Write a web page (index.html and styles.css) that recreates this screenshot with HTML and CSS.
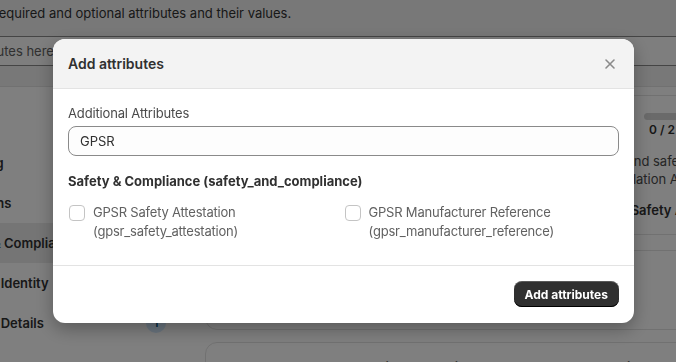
FILE: index.html
```html
<!DOCTYPE html>
<html lang="en">

<head>
  <meta charset="UTF-8" />
  <title>Listing - Add attributes</title>
  <meta name="viewport" content="width=device-width, initial-scale=1.0" />
  <link rel="stylesheet" href="styles.css">
</head>

<body>
  <div class="page">
    <p class="intro">Select required and optional attributes and their values.</p>
    <div class="search">Search attributes here</div>

    <div class="layout">
      <nav class="sidebar">
        <a>Shipping</a>
        <a>Variations</a>
        <a class="active">Safety &amp; Compliance</a>
        <a>Product Identity</a>
        <a>Product Details <span class="badge">1</span></a>
      </nav>

      <div class="content">
        <section class="section-card">
          <div class="section-head">
            <h4>Safety &amp; Compliance</h4>
            <div class="progress">
              <div class="progress-bar"></div>
              <span>0 / 2 required</span>
            </div>
          </div>
          <p class="section-desc">Provide information about the product's compliance with regional and safety
            requirements, including the General Product Safety Regulation (GPSR) and the Consumer Regulation Act.</p>
          <p class="section-field">Responsible person details and the GPSR Regulatory Information Safety Attestation</p>
          <div class="section-row"></div>
        </section>

        <section class="section-card">
          <h4>Dangerous Goods Regulations (supplier_declared_dg_hz_regulation)</h4>
        </section>
      </div>
    </div>
  </div>

  <div class="overlay">
    <div class="modal">
      <div class="modal-header">
        <h3>Add attributes</h3>
        <button class="close" aria-label="Close">
          <svg width="12" height="12" viewBox="0 0 12 12">
            <path d="M2 2l8 8M10 2l-8 8" stroke="#8a8a8a" stroke-width="1.6" stroke-linecap="round" />
          </svg>
        </button>
      </div>

      <div class="modal-body">
        <label class="field-label" for="attrSearch">Additional Attributes</label>
        <input id="attrSearch" class="field-input" type="text" value="GPSR" />

        <h4 class="group-title">Safety &amp; Compliance (safety_and_compliance)</h4>
        <div class="options">
          <label class="option">
            <span class="checkbox"></span>
            <span>GPSR Safety Attestation<br>(gpsr_safety_attestation)</span>
          </label>
          <label class="option">
            <span class="checkbox"></span>
            <span>GPSR Manufacturer Reference<br>(gpsr_manufacturer_reference)</span>
          </label>
        </div>
      </div>

      <div class="modal-footer">
        <button class="btn">Add attributes</button>
      </div>
    </div>
  </div>
</body>

</html>
```

FILE: styles.css
```css
html,
body {
  overflow: hidden;
}

body {
  margin: 0;
  background: #f1f1f1;
  font-family: 'Inter', 'Liberation Sans', sans-serif;
  font-size: 13px;
  color: #303030;
}

/* page behind the modal */
.page {
  width: 940px;
  margin-left: -48px;
  padding-top: 3px;
}

.intro {
  margin: 0;
  line-height: 20px;
  height: 33px;
}

.search {
  height: 28px;
  line-height: 28px;
  margin-left: -47px;
  padding-left: 12px;
  background: #fdfdfd;
  border: 1px solid #8a8a8a;
  color: #616161;
}

.layout {
  display: flex;
  gap: 31px;
  margin-top: 20px;
  border-top: 1px solid #e3e3e3;
  background: #fff;
}

.sidebar {
  flex: none;
  width: 222px;
  padding-top: 56px;
}

.sidebar a {
  display: flex;
  align-items: center;
  justify-content: space-between;
  height: 40px;
  margin-left: -4px;
  padding-right: 8px;
  font-weight: 600;
  color: #303030;
}

.sidebar a.active {
  background: #ebebeb;
}

.badge {
  width: 20px;
  height: 20px;
  border-radius: 50%;
  background: #d5ebff;
  color: #00527c;
  font-size: 11px;
  text-align: center;
  line-height: 20px;
}

.content {
  flex: 1;
  min-width: 0;
  padding-top: 8px;
  display: flex;
  flex-direction: column;
  gap: 12px;
}

.section-card {
  background: #fff;
  border: 1px solid #e3e3e3;
  border-radius: 12px;
  padding: 16px;
}

.section-card h4 {
  margin: 0;
  font-weight: 600;
}

.section-head {
  display: flex;
  justify-content: space-between;
  padding-top: 1px;
}

.progress {
  width: 231px;
  font-weight: 600;
  font-size: 12px;
}

.progress span {
  padding-left: 5px;
}

.progress-bar {
  height: 7px;
  border-radius: 4px;
  background: #d4d4d4;
  margin-bottom: 2px;
}

.section-desc {
  margin: 15px 0 0;
  line-height: 18px;
  color: #4a4a4a;
}

.section-field {
  margin: 14px 0 0;
  font-weight: 600;
  white-space: nowrap;
}

.section-row {
  margin: 16px -16px 62px;
  height: 15px;
  border-top: 1px solid #e3e3e3;
  border-bottom: 1px solid #e3e3e3;
}

/* modal */
.overlay {
  position: fixed;
  inset: 0;
  background: rgba(0, 0, 0, 0.5);
  padding: 39px 42px 0 53px;
}

.modal {
  background: #fff;
  border-radius: 12px;
  overflow: hidden;
  box-shadow: 0 6px 18px rgba(0, 0, 0, 0.3);
}

.modal-header {
  display: flex;
  align-items: center;
  justify-content: space-between;
  height: 49px;
  padding: 0 18px 0 15px;
  background: #f3f3f3;
  border-bottom: 1px solid #e3e3e3;
}

.modal-header h3 {
  margin: 0;
  font-size: 14px;
  font-weight: 600;
  color: #303030;
}

.close {
  border: none;
  background: none;
  padding: 0;
  width: 12px;
  height: 12px;
  display: flex;
}

.modal-body {
  padding: 14px 15px 24px;
}

.field-label {
  display: block;
  line-height: 20px;
  margin-bottom: 3px;
  letter-spacing: -0.15px;
  color: #4a4a4a;
}

.field-input {
  box-sizing: border-box;
  width: 100%;
  height: 30px;
  padding: 0 11px;
  border: 1px solid #8a8a8a;
  border-radius: 8px;
  background: #fdfdfd;
  font-family: inherit;
  font-size: 13px;
  color: #303030;
}

.group-title {
  margin: 15px 0 12px;
  line-height: 20px;
  font-size: 13px;
  font-weight: 700;
  color: #303030;
}

.options {
  display: grid;
  grid-template-columns: 1fr 1fr;
}

.option {
  display: flex;
  gap: 8px;
  line-height: 19px;
  letter-spacing: -0.2px;
  color: #616161;
}

.checkbox {
  flex: none;
  box-sizing: border-box;
  width: 16px;
  height: 16px;
  margin: 2px 0 0 1px;
  border: 1.5px solid #c4c4c4;
  border-radius: 4px;
  background: #fff;
}

.modal-footer {
  display: flex;
  justify-content: flex-end;
  padding: 15px 15px 16px;
  border-top: 1px solid #e3e3e3;
}

.btn {
  height: 26px;
  padding: 0 11px;
  border: none;
  border-radius: 8px;
  background: #303030;
  color: #fff;
  font-family: inherit;
  font-size: 12px;
  font-weight: 700;
  box-shadow: inset 0 -1px 0 #000, inset 0 1px 0 rgba(255, 255, 255, 0.2);
}
```
